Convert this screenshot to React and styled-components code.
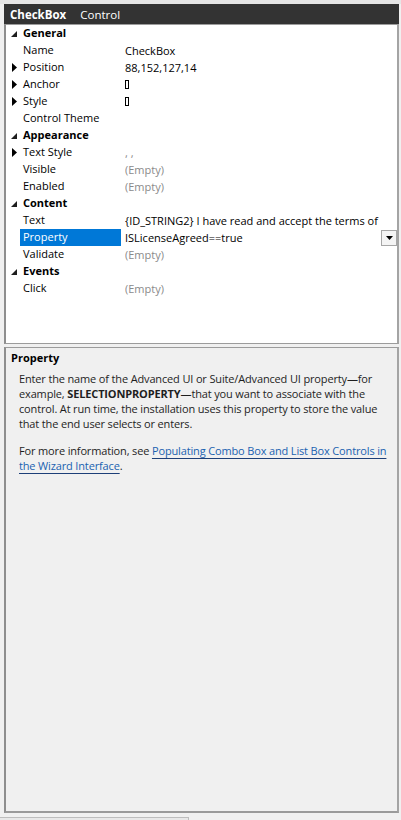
import React from "react";
import styled, { createGlobalStyle } from "styled-components";

const GlobalStyle = createGlobalStyle`
  html, body {
    margin: 0;
    padding: 0;
    background: #f0f0f0;
  }
  body {
    font-family: "Open Sans", "Noto Sans", sans-serif;
    -webkit-font-smoothing: antialiased;
  }
  * { box-sizing: border-box; }
`;

const Window = styled.div`
  width: 401px;
  height: 820px;
  display: flex;
  flex-direction: column;
  background: #f0f0f0;
  overflow: hidden;
`;

const TopStrip = styled.div`
  height: 4px;
  background: #e6e6e6;
  flex: none;
`;

const Pane = styled.div`
  margin-left: 4px;
  width: 395px;
  display: flex;
  flex-direction: column;
  flex: none;
`;

const Header = styled.div`
  height: 20px;
  background: #333333;
  display: flex;
  align-items: center;
  gap: 14px;
  padding-left: 6px;
  color: #ffffff;
  font-size: 11.5px;
`;

const HeaderTitle = styled.span`
  font-weight: ${(p) => (p.$bold ? 700 : 400)};
`;

const Grid = styled.div`
  height: 320px;
  background: #ffffff;
  border-top: 1px solid #9c9c9c;
  border-bottom: 1px solid #9c9c9c;
  border-left: 2px solid #8e8e8e;
  border-right: 2px solid #a4a4a4;
  display: flex;
  flex-direction: column;
`;

const Row = styled.div`
  height: 17px;
  display: grid;
  grid-template-columns: 14px 101px 1fr;
  align-items: stretch;
  font-size: 11px;
  color: #000000;
  line-height: 16px;
`;

const Gutter = styled.div`
  display: flex;
  align-items: center;
  justify-content: flex-end;
  padding-right: 3px;
`;

const Label = styled.div`
  padding-left: 3px;
  white-space: nowrap;
  overflow: hidden;
  font-weight: ${(p) => (p.$category ? 700 : 400)};
  background: ${(p) => (p.$selected ? "#0078d7" : "transparent")};
  color: ${(p) => (p.$selected ? "#ffffff" : "#000000")};
  ${(p) => (p.$category ? "grid-column: 2 / 4;" : "")}
`;

const Value = styled.div`
  padding-left: 4px;
  display: flex;
  align-items: center;
  white-space: nowrap;
  overflow: hidden;
  color: ${(p) => (p.$muted ? "#8a8a8a" : "#000000")};
`;

const ValueText = styled.span`
  flex: 1;
  overflow: hidden;
`;

const Tofu = styled.span`
  display: inline-block;
  width: 4px;
  height: 9px;
  border: 1px solid #000000;
  margin-top: 1px;
`;

const DropButton = styled.div`
  width: 16px;
  height: 16px;
  border: 1px solid #a6a6a6;
  background: #f4f4f4;
  display: flex;
  align-items: center;
  justify-content: center;
  flex: none;
`;

const Gap = styled.div`
  height: 3px;
`;

const Description = styled.div`
  height: 466px;
  background: #f0f0f0;
  border-top: 1px solid #9c9c9c;
  border-bottom: 2px solid #9a9a9a;
  border-left: 2px solid #8e8e8e;
  border-right: 2px solid #a4a4a4;
  padding: 2px 6px 0 5px;
  color: #1e1e1e;
`;

const DescTitle = styled.div`
  font-size: 11px;
  font-weight: 700;
  line-height: 16px;
  color: #000000;
  margin-bottom: 5px;
`;

const DescText = styled.p`
  margin: 0 0 12px 8px;
  font-size: 11px;
  line-height: 15px;
  letter-spacing: -0.15px;
`;

const Strong = styled.b`
  font-weight: 700;
`;

const DocLink = styled.span`
  color: #1a62b0;
  text-decoration: underline;
  text-decoration-color: #1d3f78;
  text-underline-offset: 3px;
`;

const BottomStrip = styled.div`
  margin-top: 4px;
  width: 189px;
  height: 10px;
  background: #e8e8e8;
  border-top: 1px solid #bdbdbd;
  border-right: 1px solid #bdbdbd;
`;

function ExpandedGlyph() {
  return (
    <svg width="6" height="6" viewBox="0 0 6 6">
      <polygon points="6,0 6,6 0,6" fill="#1e1e1e" />
    </svg>
  );
}

function CollapsedGlyph() {
  return (
    <svg width="5" height="9" viewBox="0 0 5 9">
      <polygon points="0,0 5,4.5 0,9" fill="#000000" />
    </svg>
  );
}

function DownArrow() {
  return (
    <svg width="7" height="4" viewBox="0 0 7 4">
      <polygon points="0,0 7,0 3.5,4" fill="#000000" />
    </svg>
  );
}

const rows = [
  { type: "cat", label: "General" },
  { label: "Name", value: "CheckBox" },
  { label: "Position", value: "88,152,127,14", collapsed: true },
  { label: "Anchor", tofu: true, collapsed: true },
  { label: "Style", tofu: true, collapsed: true },
  { label: "Control Theme", value: "" },
  { type: "cat", label: "Appearance" },
  { label: "Text Style", value: ", ,", muted: true, collapsed: true },
  { label: "Visible", value: "(Empty)", muted: true },
  { label: "Enabled", value: "(Empty)", muted: true },
  { type: "cat", label: "Content" },
  { label: "Text", value: "{ID_STRING2} I have read and accept the terms of" },
  { label: "Property", value: "ISLicenseAgreed==true", selected: true, dropdown: true },
  { label: "Validate", value: "(Empty)", muted: true },
  { type: "cat", label: "Events" },
  { label: "Click", value: "(Empty)", muted: true },
];

export default function App() {
  return (
    <>
      <GlobalStyle />
      <Window>
        <TopStrip />
        <Pane>
          <Header>
            <HeaderTitle $bold>CheckBox</HeaderTitle>
            <HeaderTitle>Control</HeaderTitle>
          </Header>
          <Grid>
            {rows.map((r) =>
              r.type === "cat" ? (
                <Row key={r.label}>
                  <Gutter>
                    <ExpandedGlyph />
                  </Gutter>
                  <Label $category>{r.label}</Label>
                </Row>
              ) : (
                <Row key={r.label}>
                  <Gutter>{r.collapsed ? <CollapsedGlyph /> : null}</Gutter>
                  <Label $selected={r.selected}>{r.label}</Label>
                  <Value $muted={r.muted}>
                    <ValueText>{r.tofu ? <Tofu /> : r.value}</ValueText>
                    {r.dropdown ? (
                      <DropButton>
                        <DownArrow />
                      </DropButton>
                    ) : null}
                  </Value>
                </Row>
              )
            )}
          </Grid>
          <Gap />
          <Description>
            <DescTitle>Property</DescTitle>
            <DescText>
              Enter the name of the Advanced UI or Suite/Advanced UI property—for
              example, <Strong>SELECTIONPROPERTY</Strong>—that you want to associate
              with the control. At run time, the installation uses this property to
              store the value that the end user selects or enters.
            </DescText>
            <DescText>
              For more information, see{" "}
              <DocLink>
                Populating Combo Box and List Box Controls in the Wizard Interface
              </DocLink>
              .
            </DescText>
          </Description>
        </Pane>
        <BottomStrip />
      </Window>
    </>
  );
}
